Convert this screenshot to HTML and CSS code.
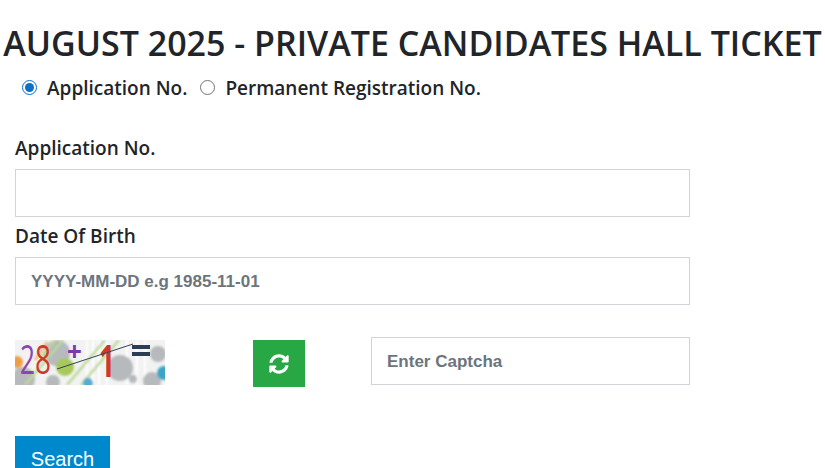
FILE: index.html
```html
<!DOCTYPE html>
<html lang="en">
<head>
    <meta charset="UTF-8">
    <meta name="viewport" content="width=device-width, initial-scale=1.0">
    <title>Hall Ticket</title>
    <link rel="stylesheet" href="styles.css">
</head>
<body>
    <h1 class="page-title">AUGUST 2025 - PRIVATE CANDIDATES HALL TICKET</h1>

    <form class="ticket-form" onsubmit="event.preventDefault()">
        <div class="radio-row">
            <label class="radio-item"><input type="radio" name="search-by" checked> Application No.</label>
            <label class="radio-item"><input type="radio" name="search-by"> Permanent Registration No.</label>
        </div>

        <div class="form-group first-group">
            <label for="app-no">Application No.</label>
            <input type="text" id="app-no" class="form-control">
        </div>
        <div class="form-group">
            <label for="dob">Date Of Birth</label>
            <input type="text" id="dob" class="form-control" placeholder="YYYY-MM-DD e.g 1985-11-01">
        </div>

        <div class="captcha-row">
            <!-- captcha picture -->
            <svg class="captcha-img" width="150" height="45" viewBox="0 0 150 45">
                <defs>
                    <filter id="soft"><feGaussianBlur stdDeviation="0.8"/></filter>
                    <clipPath id="frame"><rect width="150" height="45"/></clipPath>
                </defs>
                <g clip-path="url(#frame)">
                    <rect width="150" height="45" fill="#f1f2f1"/>
                    <g filter="url(#soft)">
                        <g stroke="#fff" stroke-width="2">
                            <path d="M72 0V45M78 0V45M84 0V45M92 0V45M112 0V45M122 0V45M130 0V45"/>
                        </g>
                        <g fill="#b6babc">
                            <circle cx="8" cy="39" r="12"/>
                            <circle cx="42" cy="13" r="13"/>
                            <circle cx="38" cy="42" r="7"/>
                            <circle cx="105" cy="28" r="13"/>
                            <circle cx="118" cy="39" r="4"/>
                            <circle cx="137" cy="41" r="9"/>
                            <circle cx="143" cy="14" r="8"/>
                        </g>
                        <g stroke="#bcd896" stroke-width="2.5" fill="none">
                            <path d="M10 45L48 0M26 17L40 0M52 45L90 0M66 45L104 0"/>
                        </g>
                        <circle cx="2" cy="22" r="6" fill="#ee9f45"/>
                        <path d="M20 20L32 2" stroke="#f0b98a" stroke-width="2.5"/>
                        <circle cx="50" cy="27" r="9" fill="#a6c95a"/>
                        <circle cx="73" cy="43" r="5" fill="#5aa9d0"/>
                        <circle cx="149" cy="33" r="7" fill="#3ba5c9"/>
                    </g>
                </g>
                <text x="5" y="34" class="captcha-num purple" textLength="15" lengthAdjust="spacingAndGlyphs">2</text>
                <text x="20" y="34" class="captcha-num red" textLength="16" lengthAdjust="spacingAndGlyphs">8</text>
                <text x="52" y="21" class="captcha-op">+</text>
                <text x="84" y="37" class="captcha-one" textLength="16" lengthAdjust="spacingAndGlyphs">1</text>
                <rect x="117" y="5" width="18" height="4" fill="#2c3e55"/>
                <rect x="117" y="12" width="18" height="4" fill="#2c3e55"/>
                <path d="M42 29L118 4" stroke="#33445c" stroke-width="1"/>
            </svg>

            <button type="button" class="refresh-btn" aria-label="Refresh captcha">
                <svg width="20" height="20" viewBox="0 0 512 512" fill="#fff">
                    <path d="M370.72 133.28C339.458 104.008 298.888 87.962 255.848 88c-77.458.068-144.328 53.178-162.791 126.85-1.344 5.363-6.122 9.15-11.651 9.15H24.103c-7.498 0-13.194-6.807-11.807-14.176C33.933 94.924 134.813 8 256 8c66.448 0 126.791 26.136 171.315 68.685L463.03 40.97C478.149 25.851 504 36.559 504 57.941V192c0 13.255-10.745 24-24 24H345.941c-21.382 0-32.09-25.851-16.971-40.971l41.75-41.749zM32 296h134.059c21.382 0 32.09 25.851 16.971 40.971l-41.75 41.75c31.262 29.273 71.835 45.319 114.876 45.28 77.418-.07 144.315-53.144 162.787-126.849 1.344-5.363 6.122-9.15 11.651-9.15h57.304c7.498 0 13.194 6.807 11.807 14.176C478.067 417.076 377.187 504 256 504c-66.448 0-126.791-26.136-171.315-68.685L48.97 471.03C33.851 486.149 8 475.441 8 454.059V320c0-13.255 10.745-24 24-24z"/>
                </svg>
            </button>

            <input type="text" class="form-control captcha-input" placeholder="Enter Captcha">
        </div>

        <button type="submit" class="search-btn">Search</button>
    </form>
</body>
</html>
```

FILE: styles.css
```css
html, body {
    height: 100%;
    overflow: hidden;
}

body {
    margin: 0;
    font-family: "Open Sans", "Noto Sans", sans-serif;
    color: #212529;
    background-color: #fff;
}

.page-title {
    margin: 0;
    padding-top: 21px;
    font-size: 34px;
    font-weight: 600;
    line-height: 44px;
    text-align: center;
    white-space: nowrap;
}

.ticket-form {
    width: 675px;
    margin-left: 15px;
}

.radio-row {
    display: flex;
    gap: 13px;
    margin-top: 8px;
    padding-left: 7px;
    height: 30px;
    align-items: center;
}

.radio-item {
    display: flex;
    align-items: center;
    font-size: 19px;
    font-weight: 600;
    gap: 10px;
}

.radio-item input {
    margin: 0;
    position: relative;
    top: -1px;
    width: 15px;
    height: 15px;
    accent-color: #0c6fc8;
}

.first-group {
    margin-top: 32px;
}

.form-group {
    margin-bottom: 6px;
}

.form-group label {
    display: block;
    margin-bottom: 8px;
    font-size: 19px;
    font-weight: 600;
    line-height: 26px;
}

.form-control {
    display: block;
    box-sizing: border-box;
    width: 100%;
    height: 48px;
    padding: 7px 15px 6px;
    border: 1px solid #ced4da;
    background-color: #fff;
    font-family: "Liberation Sans", Arial, sans-serif;
    font-size: 17px;
    font-weight: bold;
    color: #495057;
}

.form-control::placeholder {
    color: #6c757d;
    opacity: 1;
}

.captcha-row {
    display: grid;
    grid-template-columns: 238px 118px 1fr;
    align-items: start;
    margin-top: 32px;
}

.captcha-img {
    display: block;
    margin-top: 3px;
    overflow: visible;
}

.captcha-num {
    font-family: "Open Sans", sans-serif;
    font-size: 40px;
    font-weight: 500;
}

.purple {
    fill: #8e44ad;
}

.red {
    fill: #cc3b2a;
}

.captcha-op {
    font-family: "Open Sans", sans-serif;
    font-size: 26px;
    font-weight: 700;
    fill: #7d35b0;
}

.captcha-one {
    font-family: "Open Sans", sans-serif;
    font-size: 44px;
    font-weight: 700;
    fill: #cc3b2a;
}

.refresh-btn {
    display: flex;
    align-items: center;
    justify-content: center;
    width: 52px;
    height: 47px;
    margin-top: 3px;
    padding: 0;
    border: none;
    background-color: #28a745;
}

.search-btn {
    display: block;
    width: 95px;
    height: 46px;
    margin-top: 49px;
    padding: 0;
    border: none;
    background-color: #0088cc;
    color: #fff;
    font-family: "Liberation Sans", Arial, sans-serif;
    font-size: 20px;
}
```
